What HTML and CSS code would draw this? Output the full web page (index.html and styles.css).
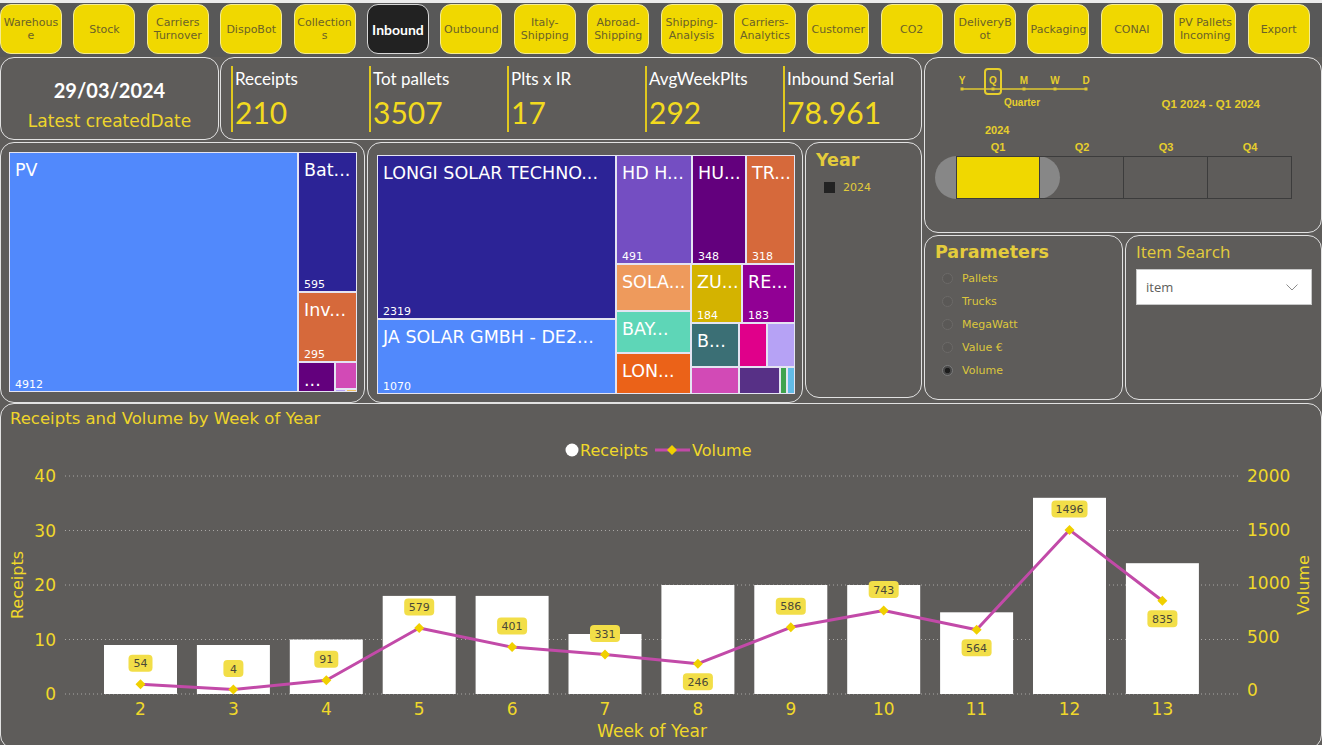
FILE: index.html
```html
<!DOCTYPE html>
<html lang="en">
  <head>
    <meta charset="UTF-8" />
    <title>Inbound</title>
    <link rel="stylesheet" href="styles.css">
  </head>
  <body>
    <nav class="topnav">
      <div class="navbtn">Warehous<br>e</div>
      <div class="navbtn">Stock</div>
      <div class="navbtn">Carriers<br>Turnover</div>
      <div class="navbtn">DispoBot</div>
      <div class="navbtn">Collection<br>s</div>
      <div class="navbtn active">Inbound</div>
      <div class="navbtn">Outbound</div>
      <div class="navbtn">Italy-<br>Shipping</div>
      <div class="navbtn">Abroad-<br>Shipping</div>
      <div class="navbtn">Shipping-<br>Analysis</div>
      <div class="navbtn">Carriers-<br>Analytics</div>
      <div class="navbtn">Customer</div>
      <div class="navbtn">CO2</div>
      <div class="navbtn">DeliveryB<br>ot</div>
      <div class="navbtn">Packaging</div>
      <div class="navbtn">CONAI</div>
      <div class="navbtn">PV Pallets<br>Incoming</div>
      <div class="navbtn">Export</div>
    </nav>

    <section class="upper">
      <div class="left-col">
        <div class="kpi-row">
          <div class="card date-card">
            <div class="date-value">29/03/2024</div>
            <div class="date-label">Latest createdDate</div>
          </div>
          <div class="card kpi-card">
            <div class="kpi"><div class="kpi-label">Receipts</div><div class="kpi-value">210</div></div>
            <div class="kpi"><div class="kpi-label">Tot pallets</div><div class="kpi-value">3507</div></div>
            <div class="kpi"><div class="kpi-label">Plts x IR</div><div class="kpi-value">17</div></div>
            <div class="kpi"><div class="kpi-label">AvgWeekPlts</div><div class="kpi-value">292</div></div>
            <div class="kpi"><div class="kpi-label">Inbound Serial</div><div class="kpi-value">78.961</div></div>
          </div>
        </div>

        <div class="viz-row">
          <!-- treemap by category -->
          <div class="card tree-card tree-cat">
            <div class="tree">
              <div class="tile" style="width:289px;background:#5189fc"><span class="tile-name">PV</span><span class="tile-val">4912</span></div>
              <div class="tcol" style="width:59px">
                <div class="tile" style="height:140px;background:#2c2396"><span class="tile-name">Bat...</span><span class="tile-val">595</span></div>
                <div class="tile" style="height:70px;background:#d6693b"><span class="tile-name">Inv...</span><span class="tile-val">295</span></div>
                <div class="trow" style="height:30px">
                  <div class="tile" style="width:37px;background:#63007d"><span class="tile-name">...</span></div>
                  <div class="tcol" style="width:22px">
                    <div class="tile bare" style="height:27px;background:#d24ab6"></div>
                    <div class="trow" style="height:3px">
                      <div class="tile bare" style="width:11px;background:#b6a2f5"></div>
                      <div class="tile bare" style="width:11px;background:#f0c060"></div>
                    </div>
                  </div>
                </div>
              </div>
            </div>
          </div>

          <!-- treemap by supplier -->
          <div class="card tree-card tree-sup">
            <div class="tree">
              <div class="tcol" style="width:239px">
                <div class="tile" style="height:164px;background:#2c2396"><span class="tile-name">LONGI SOLAR TECHNO...</span><span class="tile-val">2319</span></div>
                <div class="tile" style="height:75px;background:#5189fc"><span class="tile-name">JA SOLAR GMBH - DE2...</span><span class="tile-val">1070</span></div>
              </div>
              <div class="tcol" style="width:179px">
                <div class="trow" style="height:109px">
                  <div class="tile" style="width:76px;background:#744ec2"><span class="tile-name">HD H...</span><span class="tile-val">491</span></div>
                  <div class="tile" style="width:54px;background:#63007d"><span class="tile-name">HU...</span><span class="tile-val">348</span></div>
                  <div class="tile" style="width:49px;background:#d6693b"><span class="tile-name">TR...</span><span class="tile-val">318</span></div>
                </div>
                <div class="trow" style="height:130px">
                  <div class="tcol" style="width:75px">
                    <div class="tile" style="height:47px;background:#ee9a5c"><span class="tile-name">SOLA...</span></div>
                    <div class="tile" style="height:42px;background:#5ed6b7"><span class="tile-name">BAY...</span></div>
                    <div class="tile" style="height:41px;background:#eb6218"><span class="tile-name">LON...</span></div>
                  </div>
                  <div class="tcol" style="width:104px">
                    <div class="trow" style="height:59px">
                      <div class="tile" style="width:51px;background:#d4b300"><span class="tile-name">ZU...</span><span class="tile-val">184</span></div>
                      <div class="tile" style="width:53px;background:#910094"><span class="tile-name">RE...</span><span class="tile-val">183</span></div>
                    </div>
                    <div class="trow" style="height:44px">
                      <div class="tile" style="width:48px;background:#3b6f75"><span class="tile-name">B...</span></div>
                      <div class="tile bare" style="width:28px;background:#e0008a"></div>
                      <div class="tile bare" style="width:28px;background:#b6a2f5"></div>
                    </div>
                    <div class="trow" style="height:27px">
                      <div class="tile bare" style="width:48px;background:#d24ab6"></div>
                      <div class="tile bare" style="width:41px;background:#573086"></div>
                      <div class="tile bare" style="width:7px;background:#3fa34d"></div>
                      <div class="tile bare" style="width:8px;background:#62bce8"></div>
                    </div>
                  </div>
                </div>
              </div>
            </div>
          </div>

          <div class="card year-card">
            <div class="slicer-title">Year</div>
            <div class="year-item"><span class="check"></span>2024</div>
          </div>
        </div>
      </div>

      <div class="right-col">
        <div class="card timeline-card">
          <div class="level-row">
            <svg class="levels" width="135" height="50" viewBox="0 0 135 50">
              <line x1="6" y1="23" x2="131" y2="23" stroke="#e0c830" stroke-width="1.5" />
              <g fill="#e0c830">
                <rect x="5.5" y="21.5" width="3" height="3" />
                <rect x="36.5" y="21.5" width="3" height="3" />
                <rect x="67.5" y="21.5" width="3" height="3" />
                <rect x="98.5" y="21.5" width="3" height="3" />
                <rect x="129.5" y="21.5" width="3" height="3" />
              </g>
              <rect x="30" y="3" width="16" height="25" rx="3" fill="none" stroke="#e6ce2c" stroke-width="2" />
              <g class="lv-text" text-anchor="middle">
                <text x="7" y="17.5">Y</text>
                <text x="38" y="17.5">Q</text>
                <text x="69" y="17.5">M</text>
                <text x="100" y="17.5">W</text>
                <text x="131" y="17.5">D</text>
                <text x="67" y="39.5" class="lv-small">Quarter</text>
              </g>
            </svg>
            <span class="range">Q1 2024 - Q1 2024</span>
          </div>
          <div class="tl-year">2024</div>
          <div class="tl-quarters"><span>Q1</span><span>Q2</span><span>Q3</span><span>Q4</span></div>
          <div class="tl-bar">
            <div class="tl-pill"></div>
            <div class="tl-cell on"></div>
            <div class="tl-cell"></div>
            <div class="tl-cell"></div>
            <div class="tl-cell"></div>
          </div>
        </div>

        <div class="filter-row">
          <div class="card param-card">
            <div class="slicer-title">Parameters</div>
            <div class="radio-list">
              <div class="radio"><span class="radio-dot"></span>Pallets</div>
              <div class="radio"><span class="radio-dot"></span>Trucks</div>
              <div class="radio"><span class="radio-dot"></span>MegaWatt</div>
              <div class="radio"><span class="radio-dot"></span>Value €</div>
              <div class="radio"><span class="radio-dot on"></span>Volume</div>
            </div>
          </div>
          <div class="card search-card">
            <div class="search-title">Item Search</div>
            <div class="dropdown">
              <span>item</span>
              <svg width="12" height="7" viewBox="0 0 12 7"><polyline points="0.5,0.5 6,6 11.5,0.5" fill="none" stroke="#8c8c8c" stroke-width="1" /></svg>
            </div>
          </div>
        </div>
      </div>
    </section>

    <section class="card chart-card">
      <h3 class="chart-title">Receipts and Volume by Week of Year</h3>
      <svg class="chart" width="1320" height="312" viewBox="1 433 1320 312">
        <defs>
          <path id="dia" d="M0,-5 L5,0 L0,5 L-5,0Z" fill="#f0d000" />
        </defs>

        <!-- legend -->
        <circle cx="572" cy="450" r="6.5" fill="#ffffff" />
        <text class="legend" x="580" y="456">Receipts</text>
        <line x1="655" y1="450" x2="690" y2="450" stroke="#c24aa8" stroke-width="3" />
        <use href="#dia" x="672" y="450" />
        <text class="legend" x="692" y="456">Volume</text>

        <!-- grid -->
        <g stroke="#a9a7a5" stroke-dasharray="1 3" stroke-width="1">
          <line x1="65" y1="476" x2="1240" y2="476" />
          <line x1="65" y1="530.5" x2="1240" y2="530.5" />
          <line x1="65" y1="585" x2="1240" y2="585" />
          <line x1="65" y1="639.5" x2="1240" y2="639.5" />
          <line x1="65" y1="694" x2="1240" y2="694" />
        </g>

        <g class="axis" text-anchor="end">
          <text x="56" y="482">40</text>
          <text x="56" y="537">30</text>
          <text x="56" y="591">20</text>
          <text x="56" y="646">10</text>
          <text x="56" y="700">0</text>
        </g>
        <g class="axis">
          <text x="1247" y="482">2000</text>
          <text x="1247" y="536">1500</text>
          <text x="1247" y="589">1000</text>
          <text x="1247" y="643">500</text>
          <text x="1247" y="696">0</text>
        </g>

        <!-- receipts bars -->
        <g fill="#ffffff">
          <rect x="104" y="645" width="73" height="49" />
          <rect x="196.9" y="645" width="73" height="49" />
          <rect x="289.8" y="639.5" width="73" height="54.5" />
          <rect x="382.7" y="595.9" width="73" height="98.1" />
          <rect x="475.6" y="595.9" width="73" height="98.1" />
          <rect x="568.5" y="634" width="73" height="60" />
          <rect x="661.4" y="585" width="73" height="109" />
          <rect x="754.3" y="585" width="73" height="109" />
          <rect x="847.2" y="585" width="73" height="109" />
          <rect x="940.1" y="612.3" width="73" height="81.7" />
          <rect x="1033" y="497.8" width="73" height="196.2" />
          <rect x="1125.9" y="563.2" width="73" height="130.8" />
        </g>

        <g class="axis" text-anchor="middle">
          <text x="140.5" y="715">2</text>
          <text x="233.4" y="715">3</text>
          <text x="326.3" y="715">4</text>
          <text x="419.2" y="715">5</text>
          <text x="512.1" y="715">6</text>
          <text x="605" y="715">7</text>
          <text x="697.9" y="715">8</text>
          <text x="790.8" y="715">9</text>
          <text x="883.7" y="715">10</text>
          <text x="976.6" y="715">11</text>
          <text x="1069.5" y="715">12</text>
          <text x="1162.4" y="715">13</text>
          <text x="652" y="737" class="axis-title">Week of Year</text>
        </g>
        <text class="axis-title" text-anchor="middle" transform="translate(23,585) rotate(-90)">Receipts</text>
        <text class="axis-title" text-anchor="middle" transform="translate(1309,585) rotate(-90)">Volume</text>

        <!-- volume line -->
        <polyline fill="none" stroke="#c24aa8" stroke-width="3" stroke-linejoin="round"
          points="140.5,684.2 233.4,689.6 326.3,680.3 419.2,628 512.1,647.1 605,654.6 697.9,663.7 790.8,627.3 883.7,610.5 976.6,629.7 1069.5,529.9 1162.4,600.7" />
        <use href="#dia" x="140.5" y="684.2" />
        <use href="#dia" x="233.4" y="689.6" />
        <use href="#dia" x="326.3" y="680.3" />
        <use href="#dia" x="419.2" y="628" />
        <use href="#dia" x="512.1" y="647.1" />
        <use href="#dia" x="605" y="654.6" />
        <use href="#dia" x="697.9" y="663.7" />
        <use href="#dia" x="790.8" y="627.3" />
        <use href="#dia" x="883.7" y="610.5" />
        <use href="#dia" x="976.6" y="629.7" />
        <use href="#dia" x="1069.5" y="529.9" />
        <use href="#dia" x="1162.4" y="600.7" />

        <!-- data labels -->
        <g class="dlabel">
          <rect x="128.5" y="654.7" width="24" height="17" rx="4" /><text x="140.5" y="667.2">54</text>
          <rect x="223.4" y="660.1" width="20" height="17" rx="4" /><text x="233.4" y="672.6">4</text>
          <rect x="314.3" y="650.8" width="24" height="17" rx="4" /><text x="326.3" y="663.3">91</text>
          <rect x="404.2" y="598.5" width="30" height="17" rx="4" /><text x="419.2" y="611">579</text>
          <rect x="497.1" y="617.6" width="30" height="17" rx="4" /><text x="512.1" y="630.1">401</text>
          <rect x="590" y="625.1" width="30" height="17" rx="4" /><text x="605" y="637.6">331</text>
          <rect x="682.9" y="673.2" width="30" height="17" rx="4" /><text x="697.9" y="685.7">246</text>
          <rect x="775.8" y="597.8" width="30" height="17" rx="4" /><text x="790.8" y="610.3">586</text>
          <rect x="868.7" y="581" width="30" height="17" rx="4" /><text x="883.7" y="593.5">743</text>
          <rect x="961.6" y="639.2" width="30" height="17" rx="4" /><text x="976.6" y="651.7">564</text>
          <rect x="1051.5" y="500.4" width="36" height="17" rx="4" /><text x="1069.5" y="512.9">1496</text>
          <rect x="1147.4" y="610.2" width="30" height="17" rx="4" /><text x="1162.4" y="622.7">835</text>
        </g>
      </svg>
    </section>
  </body>
</html>
```

FILE: styles.css
```css
html,
body {
  margin: 0;
  height: 100%;
  overflow: hidden;
}
body {
  background-color: #5e5c5a;
  font-family: "DejaVu Sans", sans-serif;
}

/* top navigation */
.topnav {
  box-sizing: border-box;
  height: 57px;
  border-top: 3px solid #ececec;
  padding-top: 1px;
  background-color: #585858;
  display: flex;
  gap: 11.4px;
}
.navbtn {
  flex: 0 0 62px;
  height: 50px;
  box-sizing: border-box;
  border: 1px solid #f4eb94;
  border-radius: 11px;
  background-color: #f0d800;
  color: #6b6228;
  font-size: 11px;
  line-height: 13px;
  white-space: nowrap;
  text-align: center;
  display: flex;
  align-items: center;
  justify-content: center;
}
.navbtn.active {
  background-color: #222222;
  border-color: #d8d8d8;
  color: #ffffff;
  font-family: "Lato", sans-serif;
  font-weight: 700;
  font-size: 14px;
}

/* layout */
.card {
  box-sizing: border-box;
  border: 1px solid #e2e2e2;
  border-radius: 14px;
}
.upper {
  display: flex;
  gap: 2px;
  height: 346px;
}
.left-col {
  width: 922px;
  display: flex;
  flex-direction: column;
  gap: 2px;
}
.right-col {
  width: 398px;
  display: flex;
  flex-direction: column;
  gap: 2px;
}
.kpi-row {
  display: flex;
  gap: 1px;
  height: 83px;
}
.viz-row {
  display: flex;
  gap: 2px;
  height: 261px;
}
.filter-row {
  display: flex;
  gap: 2px;
  height: 165px;
}

/* date + kpis */
.date-card {
  width: 220px;
  display: flex;
  flex-direction: column;
  align-items: center;
  padding-top: 19px;
}
.date-value {
  font-family: "Lato", sans-serif;
  font-weight: 700;
  font-size: 20px;
  line-height: 26px;
  color: #ffffff;
}
.date-label {
  font-size: 17px;
  line-height: 20px;
  color: #eed52c;
  margin-top: 8px;
}
.kpi-card {
  flex: 1;
  display: flex;
  padding: 8px 0 0 10px;
}
.kpi {
  width: 138px;
  height: 66px;
  box-sizing: border-box;
  border-left: 2px solid #e0c81e;
  padding: 3px 0 0 2px;
}
.kpi-label {
  font-family: "Lato", sans-serif;
  font-size: 17px;
  line-height: 20px;
  color: #ffffff;
}
.kpi-value {
  font-family: "Lato", sans-serif;
  font-size: 30px;
  line-height: 36px;
  color: #f2da1f;
  margin-top: 5px;
}

/* treemaps */
.tree-cat {
  width: 365px;
  padding: 9px 0 0 8px;
}
.tree-sup {
  width: 436px;
  padding: 12px 0 0 9px;
}
.tree {
  display: flex;
}
.tree-cat .tree {
  width: 348px;
  height: 240px;
}
.tree-sup .tree {
  width: 418px;
  height: 239px;
}
.tcol {
  display: flex;
  flex-direction: column;
  flex: none;
}
.trow {
  display: flex;
  flex: none;
}
.tile {
  flex: none;
  box-sizing: border-box;
  border: 1px solid #e4e4f2;
  padding: 7px 3px 0 5px;
  overflow: hidden;
  display: flex;
  flex-direction: column;
  justify-content: space-between;
  color: #ffffff;
}
.tile.bare {
  padding: 0;
}
.tile-name {
  font-size: 17.5px;
  line-height: 20px;
  white-space: nowrap;
}
.tile-val {
  font-size: 11px;
  line-height: 13px;
}

/* year slicer */
.year-card {
  width: 117px;
  height: 256px;
  padding: 6px 0 0 10px;
}
.slicer-title {
  font-weight: 700;
  font-size: 17.5px;
  line-height: 22px;
  color: #e4cc3c;
}
.year-item {
  display: flex;
  align-items: center;
  gap: 8px;
  margin: 10px 0 0 8px;
  font-size: 11px;
  line-height: 13px;
  color: #e2cb3a;
}
.check {
  width: 11px;
  height: 11px;
  background-color: #222222;
}

/* timeline slicer */
.timeline-card {
  height: 176px;
  padding-top: 8px;
  font-family: "Liberation Sans", sans-serif;
  font-weight: 700;
  color: #e6ce2c;
}
.level-row {
  display: flex;
  height: 50px;
}
.levels {
  margin-left: 30px;
}
.lv-text {
  font-family: "Liberation Sans", sans-serif;
  font-weight: 700;
  font-size: 10px;
  fill: #e6ce2c;
}
.lv-small {
  font-size: 10px;
}
.range {
  margin: 31px 61px 0 auto;
  font-size: 11.5px;
  line-height: 14px;
}
.tl-year {
  margin: 7px 0 0 60px;
  font-size: 11px;
  line-height: 14px;
}
.tl-quarters {
  display: grid;
  grid-template-columns: repeat(4, 84px);
  margin: 3px 0 0 31px;
  font-size: 11px;
  line-height: 14px;
  text-align: center;
}
.tl-bar {
  position: relative;
  display: grid;
  grid-template-columns: repeat(4, 84px);
  height: 43px;
  margin: 2px 0 0 31px;
}
.tl-pill {
  position: absolute;
  left: -21px;
  top: 0;
  width: 125px;
  height: 43px;
  border-radius: 21.5px;
  background-color: #878787;
}
.tl-cell {
  position: relative;
  box-sizing: border-box;
  border: 1px solid #3c3c3c;
  border-left: none;
}
.tl-cell.on {
  background-color: #f0d800;
  border-left: 1px solid #3c3c3c;
}

/* parameters */
.param-card {
  width: 199px;
  padding: 5px 0 0 10px;
}
.radio-list {
  margin-top: 4.6px;
}
.radio {
  height: 22.8px;
  display: flex;
  align-items: center;
  gap: 9px;
  padding-left: 7px;
  font-size: 11px;
  color: #dcc63c;
}
.radio-dot {
  width: 11px;
  height: 11px;
  box-sizing: border-box;
  border-radius: 50%;
  border: 1px solid #6c6a68;
  background-color: #5a5856;
}
.radio-dot.on {
  border-color: #7a7a7a;
  background: radial-gradient(circle, #1c1c1c 0 2.5px, #474747 3px);
}

/* item search */
.search-card {
  width: 197px;
  padding: 5px 9px 0 10px;
}
.search-title {
  font-family: "Open Sans", sans-serif;
  font-size: 17px;
  line-height: 22px;
  color: #e4cc3c;
}
.dropdown {
  margin-top: 6px;
  width: 176px;
  height: 36px;
  box-sizing: border-box;
  border: 1px solid #c8c8c8;
  background-color: #ffffff;
  display: flex;
  align-items: center;
  justify-content: space-between;
  padding: 0 13px 0 9px;
  font-family: "Open Sans", sans-serif;
  font-size: 13px;
  color: #605e5c;
}

/* chart */
.chart-card {
  height: 346px;
}
.chart-title {
  margin: 0;
  height: 29px;
  padding-left: 9px;
  font-weight: 400;
  font-size: 16.5px;
  line-height: 29px;
  color: #efd52a;
}
.chart {
  display: block;
  font-family: "DejaVu Sans", sans-serif;
}
.chart .axis text,
.chart .axis-title {
  font-size: 17px;
  fill: #f0d82a;
}
.chart .axis-title {
  font-size: 16px;
}
.chart .legend {
  font-size: 16px;
  fill: #f0d82a;
}
.dlabel rect {
  fill: #f2de48;
}
.dlabel text {
  font-size: 11px;
  fill: #4a4838;
  text-anchor: middle;
}
```
